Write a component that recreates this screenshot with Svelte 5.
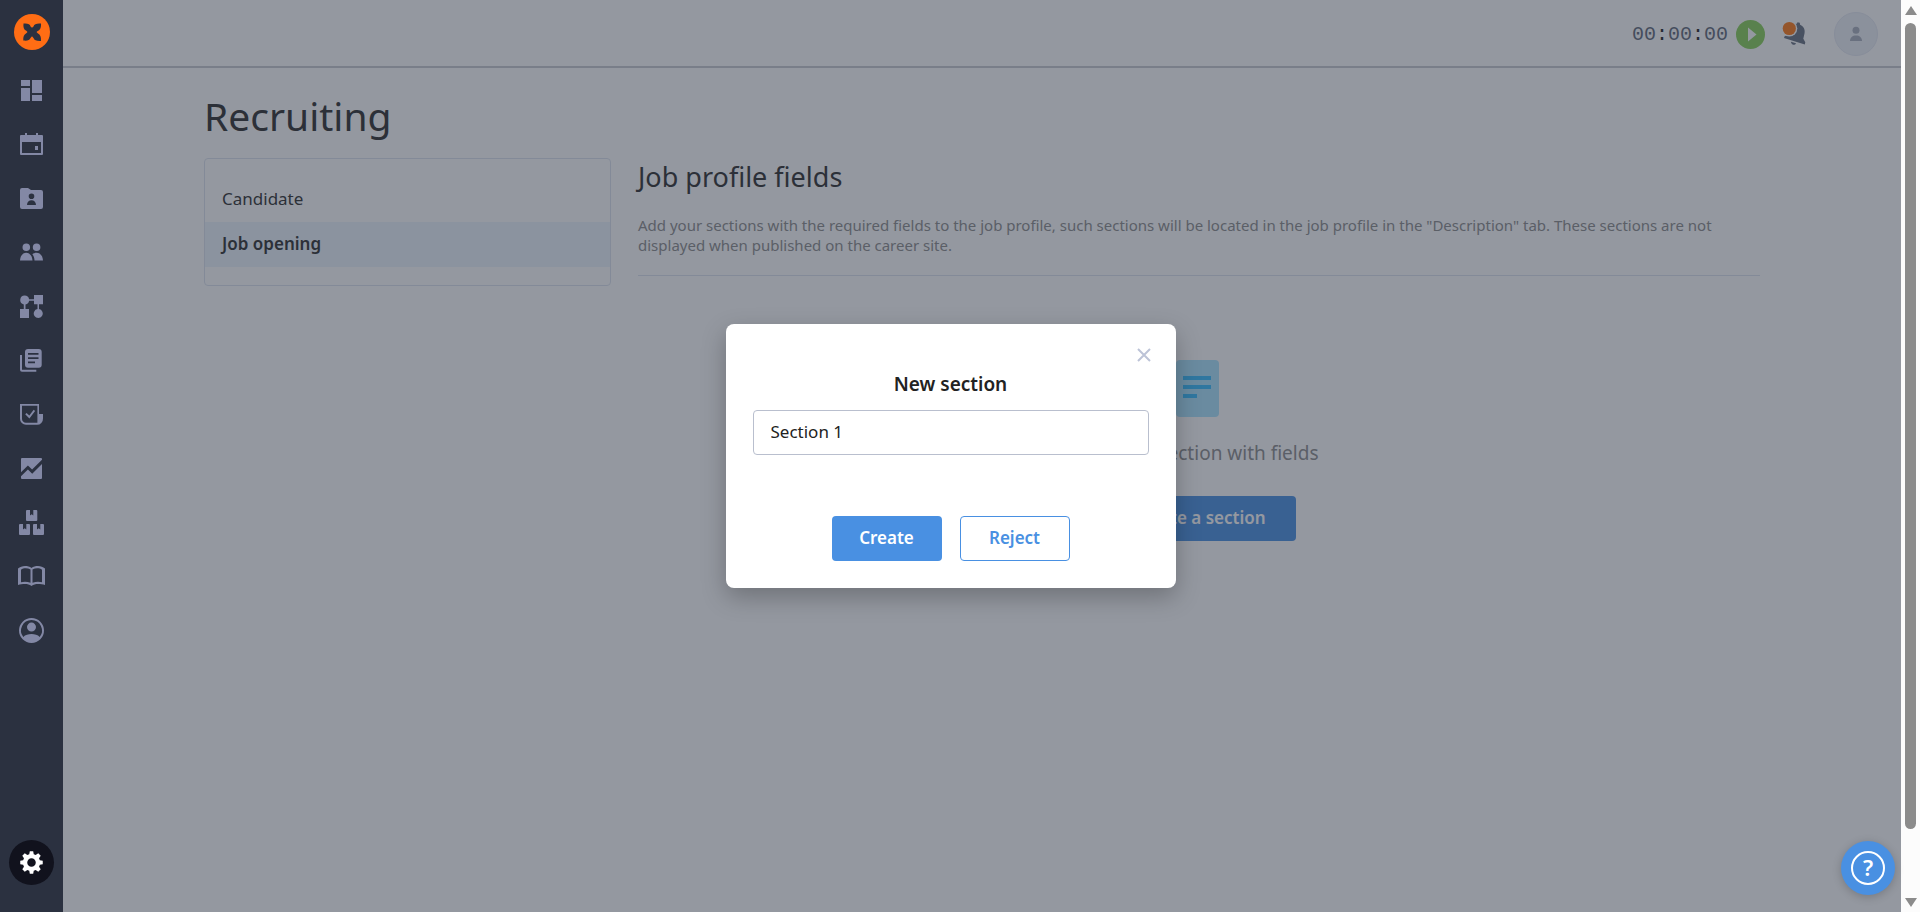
<script lang="ts">
	let modalOpen: boolean = true;
	let sectionName: string = 'Section 1';
	let active: string = 'Job opening';

	const tabs: string[] = ['Candidate', 'Job opening'];
	const timer: string[] = ['00', '00', '00'];

	const closeModal = () => {
		modalOpen = false;
	};

	const openModal = () => {
		modalOpen = true;
	};

	const navItems = [
		{
			label: 'Dashboard',
			path: 'M4 3h9v6H4zM4 11h9v13H4zM15 3h10v13H15zM15 18h10v6H15z'
		},
		{
			label: 'Calendar',
			path: 'M8 2h2v2h9V2h2v2h4a1 1 0 0 1 1 1v18a1 1 0 0 1-1 1H4a1 1 0 0 1-1-1V5a1 1 0 0 1 1-1h4zM5 11v11h19V11zM18 15h3v4h-3z'
		},
		{
			label: 'Personnel files',
			path: 'M5 3h6l3 2h10a2 2 0 0 1 2 2v15a2 2 0 0 1-2 2H5a2 2 0 0 1-2-2V5a2 2 0 0 1 2-2zM14.500 8.500a2.800 2.800 0 1 0 0 5.600 2.800 2.800 0 1 0 0-5.600zM10 20h9c0-3-2-4.700-4.500-4.700S10 17 10 20z'
		},
		{
			label: 'Team',
			path: 'M9.300 4.500a3.800 3.800 0 1 1 0 7.600 3.800 3.800 0 1 1 0-7.600zM19.600 4.500a3.800 3.800 0 1 1 0 7.600 3.800 3.800 0 1 1 0-7.600zM3 21.500c.3-5 3-7.800 6.200-7.800s6 2.800 6.300 7.800zM15.300 15.200c1.200-1 2.600-1.500 4.200-1.500 3.400 0 6.200 2.800 6.500 7.800h-8.500c0-2.600-.8-4.800-2.200-6.300z'
		},
		{
			label: 'Processes',
			path: 'M7.700 2.500a4.500 4.500 0 0 1 4.400 3.700H17V2h9v9.300h-4V16a4.500 4.500 0 1 1-1.500 0v-4.700H17V7.700h-4.900a4.500 4.500 0 0 1-3.600 3.700V16H12v9H3v-9h3.800v-4.600a4.500 4.500 0 0 1 .9-8.900z'
		},
		{
			label: 'Documents',
			path: 'M3 8h2v14.700h14.300v2H5a2 2 0 0 1-2-2zM11 2h10.700a3 3 0 0 1 3 3v12.700a3 3 0 0 1-3 3H11a3 3 0 0 1-3-3V5a3 3 0 0 1 3-3zM11 6v1.700h10.500V6zM11 10.200v1.700h10.500v-1.700zM11 14.500v1.700h7v-1.700z'
		},
		{
			label: 'Surveys',
			path: 'M3 3h19v10h4v4.500a6 6 0 0 1-6 6.300H9a6 6 0 0 1-6-6zM5 4.800V17.500a4 4 0 0 0 4 4.300h11.400V4.800zM8.200 13.200l1.400-1.300 2.700 2.700 4.400-5.800 1.400 1.100-5.700 7.500z'
		},
		{
			label: 'Reports',
			path: 'M5 3h19a1 1 0 0 1 1 1v.7l-9.900 9.900-4.200-4.200L4 17.300V4a1 1 0 0 1 1-1zM25 9v14a1 1 0 0 1-1 1H5a1 1 0 0 1-1-1v-1.700l6.900-6.900 4.300 4.300z'
		},
		{
			label: 'Assets',
			path: 'M10 1h3v5.500l1.700-1.200 1.600 1.200V1h3a1 1 0 0 1 1 1v9a1 1 0 0 1-1 1H10a1 1 0 0 1-1-1V2a1 1 0 0 1 1-1zM3 15h3v5.500l1.700-1.200 1.600 1.200V15H12a1 1 0 0 1 1 1v9a1 1 0 0 1-1 1H3a1 1 0 0 1-1-1v-9a1 1 0 0 1 1-1zM17 15h3v5.500l1.700-1.200 1.600 1.200V15H26a1 1 0 0 1 1 1v9a1 1 0 0 1-1 1h-9a1 1 0 0 1-1-1v-9a1 1 0 0 1 1-1z'
		},
		{
			label: 'Knowledge base',
			path: 'M1 5.500C3 4 5.200 3 8 3c2.500 0 4.700.6 6.500 2C16.300 3.600 18.500 3 21 3c2.800 0 5 1 7 2.500V22c-2-.6-4.500-1-7-1-2.400 0-4.500.6-6.500 2-2-1.400-4.100-2-6.500-2-2.500 0-5 .4-7 1zM4 6.700v12.500c3-.8 6.500-.7 9.500.6V6.500C10.500 4.900 6.500 4.900 4 6.700zM15.500 6.500v13.300c3-1.300 6.500-1.400 9.500-.6V6.700c-2.500-1.800-6.500-1.800-9.500-.2z'
		},
		{
			label: 'Profile',
			path: 'M14.500 1a12.500 12.500 0 1 0 0 25 12.500 12.500 0 1 0 0-25zM14.500 3a10.500 10.500 0 0 1 8.200 17c-2-2.300-5-3-8.200-3s-6.200.7-8.200 3a10.500 10.500 0 0 1 8.200-17zM14.500 5.600a4.500 4.500 0 1 1 0 9 4.500 4.500 0 1 1 0-9z'
		}
	];
</script>

<div class="app">
	<div class="screen">
		<aside class="sidebar">
			<a class="logo" href="#home" aria-label="Home">
				<svg viewBox="0 0 36 36" width="36" height="36">
					<circle cx="18" cy="18" r="18" fill="#ff6d14" />
					<path
						fill="#2b3140"
						d="M9.500 9.500c4-.3 6.500.2 7 3l1.500 1.300 1.500-1.300c.8-2.800 3.500-3.300 7.500-3 .2 3.500-.3 6-3.300 7.500L22.500 18l1.200 1.200c2.800 1.300 3.500 3.800 3.300 7.800-4.200.2-6.700-.5-7.500-3L18 22.300 16.500 24c-1 2.300-3.200 3-7.200 2.500-.2-3.700.5-6 3-7.300l1.200-1.200-1.200-1.200c-2.600-1.300-3.200-3.600-2.800-7.300z"
					/>
				</svg>
			</a>
			<nav>
				{#each navItems as item}
					<a class="nav-link" href="#nav" aria-label={item.label}>
						<svg viewBox="0 0 28 28" width="28" height="28">
							<path d={item.path} fill-rule="evenodd" />
						</svg>
					</a>
				{/each}
			</nav>
			<a class="settings" href="#settings" aria-label="Settings">
				<svg viewBox="0 0 24 24" width="27" height="27">
					<path
						fill="#fff"
						fill-rule="evenodd"
						d="M10.500 2h3l.5 2.600 1.700.7L18 3.800 20.200 6l-1.500 2.300.7 1.700 2.600.5v3l-2.600.5-.7 1.700 1.500 2.300-2.200 2.200-2.300-1.500-1.700.7-.5 2.600h-3l-.5-2.600-1.700-.7L6 20.200 3.800 18l1.500-2.300-.7-1.700-2.600-.5v-3l2.600-.5.7-1.700L3.800 6 6 3.800l2.300 1.500 1.700-.7zM12 8.200a3.800 3.800 0 1 0 0 7.600 3.800 3.800 0 1 0 0-7.600z"
					/>
				</svg>
			</a>
		</aside>

		<div class="page">
			<header>
				<div class="timer">
					{#each timer as part, i}{#if i > 0}<b>:</b>{/if}{part}{/each}
				</div>
				<button class="play" aria-label="Start timer">
					<svg viewBox="0 0 29 29" width="29" height="29">
						<path d="M12 7.500v14l8.500-7z" fill="#fff" />
					</svg>
				</button>
				<button class="bell" aria-label="Notifications">
					<svg viewBox="0 0 28 28" width="28" height="28">
						<path
							fill="#677080"
							d="M17.500 2.300l2.300.5.3 2c3.700 1.800 5.200 4.700 4.400 8.700l-1.200 5.300 2 3.500-.5 2.200L4 18l.6-1.700 3.400-1.800 1.500-5.500c1-3.500 3.800-5.300 7.300-5.200zM11 21.800l5 1.400c-.5 1.200-1.600 1.800-2.900 1.500-1.300-.3-2.100-1.500-2.100-2.900z"
						/>
						<circle cx="9.300" cy="8.500" r="8" fill="#fff" />
						<circle cx="9.300" cy="8.500" r="6.600" fill="#ff7914" />
					</svg>
				</button>
				<button class="avatar" aria-label="Account">
					<svg viewBox="0 0 14 16" width="14" height="16">
						<circle cx="7" cy="4.300" r="3.500" />
						<path d="M1 15c0-3.500 2.500-5.500 6-5.500s6 2 6 5.500z" />
					</svg>
				</button>
			</header>

			<main>
				<h1>Recruiting</h1>
				<div class="columns">
					<nav class="tabs">
						{#each tabs as tab}
							<a href="#tab" class:active={tab === active} on:click|preventDefault={() => (active = tab)}>{tab}</a>
						{/each}
					</nav>
					<section class="content">
						<h2>Job profile fields</h2>
						<p class="hint">
							Add your sections with the required fields to the job profile, such sections will be located in the job
							profile in the "Description" tab. These sections are not displayed when published on the career site.
						</p>
						<div class="empty">
							<svg viewBox="0 0 46 57" width="46" height="57">
								<rect width="43" height="57" rx="4" fill="#abe4ff" />
								<path d="M7 16h28v4H7zM7 25h28v4H7zM7 34h14v4H7z" fill="#35bdff" />
							</svg>
							<p>Create a section with fields</p>
							<button class="btn primary" on:click={openModal}>Create a section</button>
						</div>
					</section>
				</div>
			</main>
		</div>

		{#if modalOpen}
			<div class="overlay">
				<div class="modal" role="dialog" aria-modal="true" aria-labelledby="modal-title">
					<button class="close" aria-label="Close" on:click={closeModal}>
						<svg viewBox="0 0 14 14" width="14" height="14">
							<path d="M1 1l12 12M13 1L1 13" stroke="#bcc3d7" stroke-width="2" />
						</svg>
					</button>
					<h3 id="modal-title">New section</h3>
					<input type="text" aria-labelledby="modal-title" bind:value={sectionName} />
					<div class="actions">
						<button class="btn primary" on:click={closeModal}>Create</button>
						<button class="btn outline" on:click={closeModal}>Reject</button>
					</div>
				</div>
			</div>
		{/if}

		<button class="help" aria-label="Help"><span>?</span></button>
	</div>

	<div class="scrollbar">
		<svg viewBox="0 0 12 10" width="12" height="10"><path d="M6 0l6 9H0z" /></svg>
		<div class="thumb"></div>
		<svg viewBox="0 0 12 10" width="12" height="10"><path d="M6 10L0 1h12z" /></svg>
	</div>
</div>

<style>
	:global(body) {
		margin: 0;
		overflow: hidden;
	}

	.app {
		display: flex;
		height: 100vh;
		font-family: 'Noto Sans', sans-serif;
		color: #2e2e2e;
	}

	.app * {
		box-sizing: border-box;
	}

	button {
		font-family: inherit;
		border: none;
		padding: 0;
		background: none;
		cursor: pointer;
	}

	svg {
		display: block;
	}

	.screen {
		position: relative;
		display: flex;
		flex: 1;
		min-width: 0;
	}

	.sidebar {
		position: relative;
		z-index: 3;
		display: flex;
		flex-direction: column;
		align-items: center;
		width: 63px;
		padding-bottom: 27px;
		background-color: #2b3140;
	}

	.logo {
		display: flex;
		align-items: center;
		height: 64px;
		margin-left: 1px;
	}

	.nav-link {
		display: flex;
		align-items: center;
		height: 54px;
		padding-right: 1px;
		fill: #8388a5;
	}

	.settings {
		display: flex;
		align-items: center;
		justify-content: center;
		width: 45px;
		height: 45px;
		margin-top: auto;
		border-radius: 50%;
		background-color: #11121d;
	}

	.page {
		flex: 1;
		min-width: 0;
		background-color: #fff;
	}

	header {
		display: flex;
		align-items: center;
		justify-content: flex-end;
		height: 68px;
		padding: 2px 23px 0 0;
		border-bottom: 2px solid #c8cbd0;
	}

	.timer {
		font-family: 'Liberation Mono', monospace;
		font-size: 20px;
		color: #5f6878;
	}

	.timer b {
		font-weight: normal;
		color: #222;
	}

	.play {
		margin-left: 8px;
		border-radius: 50%;
		background-color: #88d058;
	}

	.bell {
		margin-left: 15px;
	}

	.avatar {
		display: flex;
		align-items: center;
		justify-content: center;
		width: 44px;
		height: 44px;
		margin-left: 26px;
		border: 1px solid #e4e8f2;
		border-radius: 50%;
		background-color: #edf0f6;
		fill: #a9afbd;
	}

	main {
		padding: 19px 141px;
	}

	h1 {
		margin: 0;
		font-size: 39px;
		font-weight: 400;
		line-height: 58px;
	}

	.columns {
		display: flex;
		align-items: flex-start;
		gap: 27px;
		padding-top: 13px;
	}

	.tabs {
		width: 407px;
		flex: none;
		padding: 18px 0;
		border: 1px solid #dde2ee;
		border-radius: 4px;
	}

	.tabs a {
		display: block;
		padding: 0 17px 2px;
		font-size: 17px;
		line-height: 43px;
		color: #2e2e2e;
		text-decoration: none;
	}

	.tabs a.active {
		font-weight: 600;
		background-color: #edf4fd;
	}

	.content {
		flex: 1;
		min-width: 0;
	}

	h2 {
		margin: 0;
		font-size: 27px;
		font-weight: 400;
		line-height: 38px;
	}

	.hint {
		margin: 0;
		padding: 19px 0 20px;
		border-bottom: 1px solid #dde2ee;
		font-size: 15px;
		line-height: 20px;
		color: #8c8c8c;
	}

	.empty {
		display: flex;
		flex-direction: column;
		align-items: center;
		padding-top: 84px;
	}

	.empty p {
		margin: 21px 0 28px;
		font-size: 19px;
		line-height: 30px;
		color: #8c8c8c;
	}

	.btn {
		height: 45px;
		padding: 0 30px 2px;
		border-radius: 4px;
		font-size: 17px;
		font-weight: 600;
	}

	.primary {
		color: #fff;
		background-color: #4990e2;
	}

	.outline {
		border: 1px solid #4990e2;
		color: #4990e2;
		background-color: #fff;
	}

	.overlay {
		position: absolute;
		inset: 0;
		z-index: 2;
		display: flex;
		align-items: center;
		justify-content: center;
		background-color: rgba(41, 49, 66, 0.5);
	}

	.modal {
		position: relative;
		display: flex;
		flex-direction: column;
		align-items: center;
		width: 450px;
		padding: 45px 27px 27px;
		border-radius: 8px;
		background-color: #fff;
		box-shadow: 0 9px 24px rgba(0, 0, 0, 0.25);
	}

	.close {
		position: absolute;
		top: 24px;
		right: 25px;
	}

	h3 {
		margin: 0 0 11px;
		font-size: 19px;
		font-weight: 600;
		line-height: 30px;
		color: #222;
	}

	input {
		width: 100%;
		height: 45px;
		padding: 0 17px 2px;
		border: 1px solid #b9bfce;
		border-radius: 4px;
		outline: none;
		font-family: inherit;
		font-size: 17px;
		color: #222;
	}

	.actions {
		display: flex;
		gap: 18px;
		margin-top: 61px;
	}

	.actions .btn {
		width: 110px;
		padding: 0 0 2px;
	}

	.help {
		position: absolute;
		right: 6px;
		bottom: 17px;
		z-index: 4;
		display: flex;
		align-items: center;
		justify-content: center;
		width: 54px;
		height: 54px;
		border-radius: 50%;
		background-color: #4990e2;
		box-shadow: 0 2px 10px rgba(0, 0, 0, 0.2);
	}

	.help span {
		width: 34px;
		height: 34px;
		border: 2px solid #fff;
		border-radius: 50%;
		font-size: 22px;
		font-weight: 600;
		line-height: 29px;
		color: #fff;
	}

	.scrollbar {
		display: flex;
		flex-direction: column;
		align-items: center;
		width: 19px;
		padding: 6px 0 5px;
		background-color: #fcfcfc;
		fill: #8b8b8b;
	}

	.thumb {
		width: 11px;
		height: calc(100% - 95px);
		margin: 7px 0 auto;
		border-radius: 6px;
		background-color: #8b8b8b;
	}
</style>
